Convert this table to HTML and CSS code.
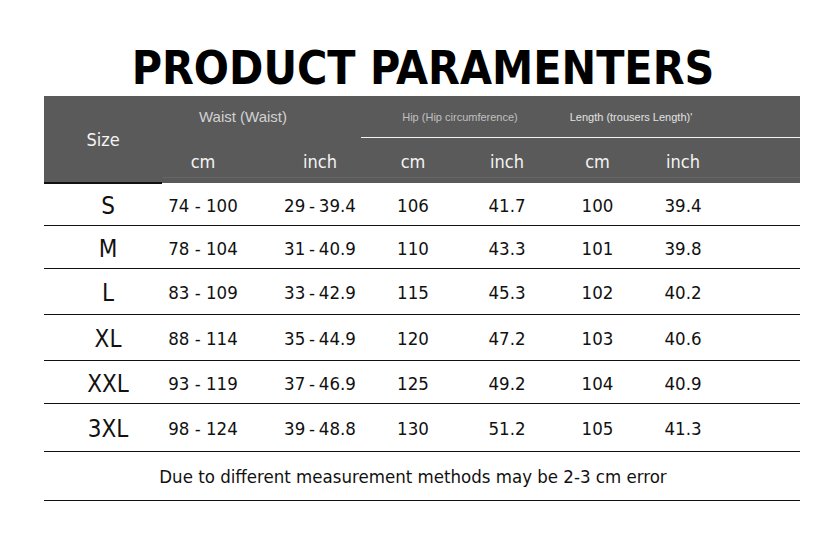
FILE: index.html
```html
<!DOCTYPE html>
<html lang="en">
<head>
<meta charset="utf-8">
<title>Product Paramenters</title>
<link rel="stylesheet" href="styles.css">
</head>
<body>
<main class="sheet">
  <h1 class="title">PRODUCT PARAMENTERS</h1>
  <section class="table">
    <div class="head">
      <div class="size-head">Size</div>
      <div class="group group-waist">Waist (Waist)</div>
      <div class="group group-hip">Hip (Hip circumference)</div>
      <div class="group group-len">Length (trousers Length)'</div>
      <div class="rule-white"></div>
      <div class="unit c-cm1">cm</div>
      <div class="unit c-in1">inch</div>
      <div class="unit">cm</div>
      <div class="unit">inch</div>
      <div class="unit">cm</div>
      <div class="unit">inch</div>
      <div class="rule-faint"></div>
    </div>

    <div class="row h42">
      <div class="sz">S</div><div class="c-cm1">74 - 100</div><div class="c-in1 tight">29 - 39.4</div><div>106</div><div>41.7</div><div>100</div><div>39.4</div><div></div>
    </div>
    <div class="row h42">
      <div class="sz">M</div><div class="c-cm1">78 - 104</div><div class="c-in1 tight">31 - 40.9</div><div>110</div><div>43.3</div><div>101</div><div>39.8</div><div></div>
    </div>
    <div class="row h45">
      <div class="sz">L</div><div class="c-cm1">83 - 109</div><div class="c-in1 tight">33 - 42.9</div><div>115</div><div>45.3</div><div>102</div><div>40.2</div><div></div>
    </div>
    <div class="row h45">
      <div class="sz">XL</div><div class="c-cm1">88 - 114</div><div class="c-in1 tight">35 - 44.9</div><div>120</div><div>47.2</div><div>103</div><div>40.6</div><div></div>
    </div>
    <div class="row h42">
      <div class="sz">XXL</div><div class="c-cm1">93 - 119</div><div class="c-in1 tight">37 - 46.9</div><div>125</div><div>49.2</div><div>104</div><div>40.9</div><div></div>
    </div>
    <div class="row h47">
      <div class="sz">3XL</div><div class="c-cm1">98 - 124</div><div class="c-in1 tight">39 - 48.8</div><div>130</div><div>51.2</div><div>105</div><div>41.3</div><div></div>
    </div>
    <div class="note">Due to different measurement methods may be 2-3 cm error</div>
  </section>
</main>
</body>
</html>
```
FILE: styles.css
```css
html, body {
  margin: 0;
  padding: 0;
  background: #ffffff;
}

.sheet {
  padding-top: 45px;
  font-family: "DejaVu Sans Condensed", "DejaVu Sans", sans-serif;
  font-stretch: condensed;
  color: #111111;
}

.title {
  margin: 0 0 5px;
  padding-left: 7px;
  text-align: center;
  font-family: "DejaVu Sans Condensed", "DejaVu Sans", sans-serif;
  font-stretch: condensed;
  font-weight: bold;
  font-size: 46px;
  line-height: 46px;
  color: #000000;
}

.table {
  margin-left: 44px;
  width: 756px;
}

.head,
.row {
  display: grid;
  grid-template-columns: 118px 99px 105px 94px 94px 87px 84px 75px;
}

.head {
  grid-template-rows: 41px 1px 39px 1px 5px;
  background: #5a5a5a;
  color: #f4f4f4;
}

.size-head {
  grid-column: 1;
  grid-row: 1 / 6;
  display: flex;
  align-items: center;
  justify-content: center;
  font-size: 18px;
  border-bottom: 2px solid #111111;
  margin-bottom: -1px;
}

.group {
  grid-row: 1;
  display: flex;
  align-items: center;
  justify-content: center;
  font-family: "Liberation Sans", Arial, sans-serif;
  font-stretch: normal;
}

.group-waist {
  grid-column: 2 / 4;
  font-size: 15px;
  color: #d2d2d2;
  padding-right: 42px;
}

.group-hip {
  grid-column: 4 / 6;
  font-size: 11px;
  color: #c0c0c0;
}

.group-len {
  grid-column: 6 / 8;
  font-size: 11px;
  color: #e2e2e2;
  padding-right: 17px;
}

.rule-white {
  grid-column: 4 / 9;
  grid-row: 2;
  margin-left: -5px;
  background: #f2f2f2;
}

.rule-faint {
  grid-column: 2 / 9;
  grid-row: 4;
  background: #666666;
}

.unit {
  grid-row: 3;
  display: flex;
  align-items: center;
  justify-content: center;
  padding-top: 8px;
  font-size: 18px;
}

.row {
  border-bottom: 1px solid #111111;
  font-size: 18.5px;
}

.row > div {
  display: flex;
  align-items: center;
  justify-content: center;
  padding-top: 2px;
}

.h42 { height: 42px; }
.h45 { height: 45px; }
.h47 { height: 47px; }

.row > .sz {
  font-size: 24px;
  padding-left: 10px;
  padding-top: 3px;
}

.c-cm1 { padding-right: 17px; }
.c-in1 { padding-left: 13px; }
.unit.c-cm1 { padding-right: 17px; }
.unit.c-in1 { padding-left: 13px; }

.tight { word-spacing: -1.5px; }

.note {
  height: 48px;
  display: flex;
  align-items: center;
  justify-content: center;
  padding-right: 18px;
  font-size: 18.5px;
  border-bottom: 1px solid #111111;
}
```
